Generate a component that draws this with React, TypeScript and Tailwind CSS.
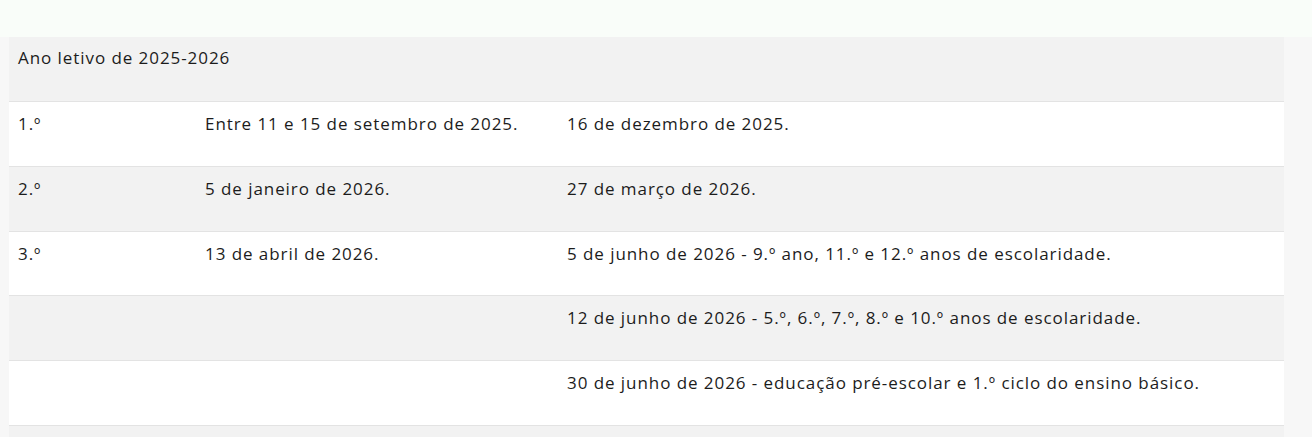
const rows: [string, string, string][] = [
  ['1.º', 'Entre 11 e 15 de setembro de 2025.', '16 de dezembro de 2025.'],
  ['2.º', '5 de janeiro de 2026.', '27 de março de 2026.'],
  ['3.º', '13 de abril de 2026.', '5 de junho de 2026 - 9.º ano, 11.º e 12.º anos de escolaridade.'],
  ['', '', '12 de junho de 2026 - 5.º, 6.º, 7.º, 8.º e 10.º anos de escolaridade.'],
  ['', '', '30 de junho de 2026 - educação pré-escolar e 1.º ciclo do ensino básico.'],
  ['', '', ''],
];

export default function App() {
  return (
    <div className="h-screen overflow-hidden bg-[#f7f7f7] text-[#1c1c1c] font-['Open_Sans',sans-serif] text-[17px] tracking-[0.055em]">
      {/* top band */}
      <div className="h-[37px] bg-[#f9fdf9]" />

      <div className="ml-[9px] mr-[28px]">
        {/* header */}
        <div className="h-[65px] bg-[#f2f2f2] border-b border-[#e3e3e3] px-[9px] pt-[9px] leading-6">
          Ano letivo de 2025-2026
        </div>

        {rows.map((r, i) => (
          <div
            key={i}
            className={`grid grid-cols-[187px_362px_1fr] border-b border-[#e3e3e3] leading-6 ${
              i === 2 ? 'h-[64px]' : 'h-[65px]'
            } ${i % 2 === 0 ? 'bg-white' : 'bg-[#f2f2f2]'}`}
          >
            <div className="px-[9px] pt-[10px]">{r[0]}</div>
            <div className="px-[9px] pt-[10px]">{r[1]}</div>
            <div className="px-[9px] pt-[10px]">{r[2]}</div>
          </div>
        ))}
      </div>
    </div>
  );
}
